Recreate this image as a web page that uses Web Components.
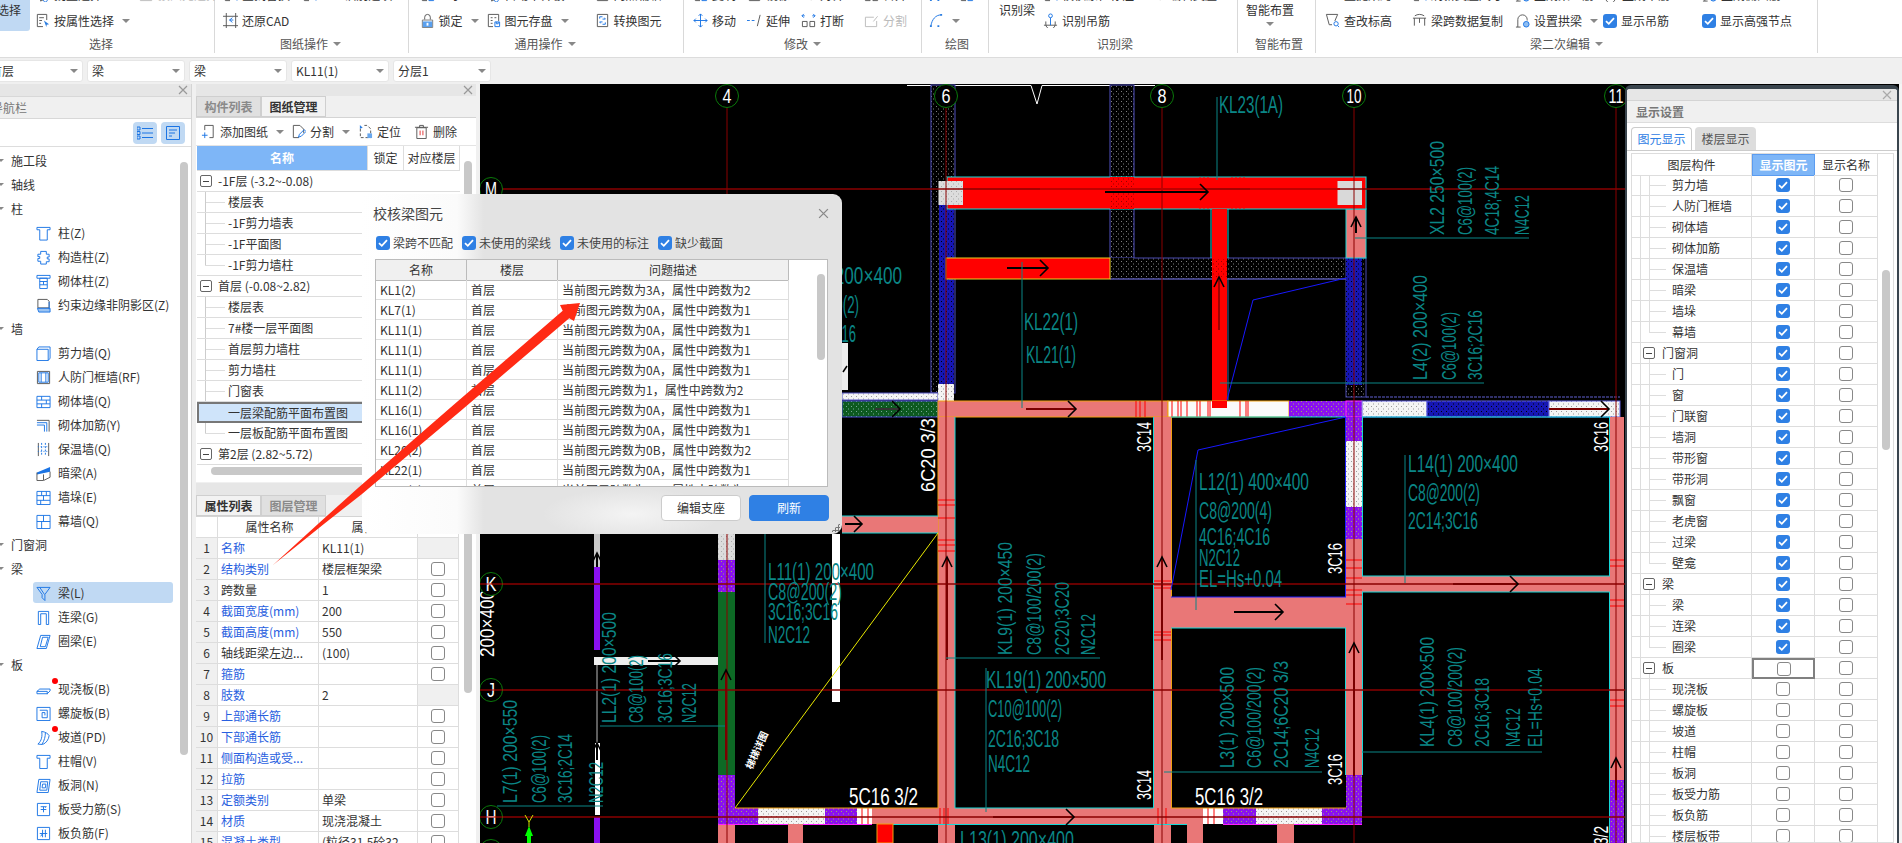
<!DOCTYPE html>
<html>
<head>
<meta charset="utf-8">
<title>校核梁图元</title>
<style>
  html, body { margin: 0; height: 100%; overflow: hidden; background: #f0f0f0; }
</style>
</head>
<body>
<gtj-app>
  <gtj-ribbon slot="ribbon">
    <rb-group w="215" pl="0" lx="89" label="选择">
      <rb-big w="30" sel="1" tx="-3">选择</rb-big>
      <rb-col ml="5">
        <rb-row><rb-item w="104" icon="filter">批量选择</rb-item><rb-item off="1" icon="split">按图元选择</rb-item></rb-row>
        <rb-row><rb-item icon="attr" caret="1">按属性选择</rb-item></rb-row>
      </rb-col>
    </rb-group>
    <rb-group w="193.5" pl="8" lx="65" label="图纸操作" caret="1">
      <rb-col>
        <rb-row><rb-item w="79" icon="find">查找替换</rb-item><rb-item icon="find">CAD识别选项</rb-item></rb-row>
        <rb-row><rb-item icon="crop">还原CAD</rb-item></rb-row>
      </rb-col>
    </rb-group>
    <rb-group w="275.5" pl="11" lx="106" label="通用操作" caret="1">
      <rb-col>
        <rb-row><rb-item w="66" icon="store">显示</rb-item><rb-item w="109" icon="filter">自动平齐板</rb-item><rb-item icon="convert">两点辅轴</rb-item></rb-row>
        <rb-row><rb-item w="66" icon="lock" caret="1">锁定</rb-item><rb-item w="109" icon="store" caret="1">图元存盘</rb-item><rb-item icon="convert">转换图元</rb-item></rb-row>
      </rb-col>
    </rb-group>
    <rb-group w="238" pl="9" lx="100" label="修改" caret="1">
      <rb-col>
        <rb-row><rb-item w="54" icon="store">复制</rb-item><rb-item w="54" icon="convert">镜像</rb-item><rb-item w="63" icon="extend">对齐</rb-item><rb-item icon="break">合并</rb-item></rb-row>
        <rb-row><rb-item w="54" icon="move">移动</rb-item><rb-item w="54" icon="extend">延伸</rb-item><rb-item w="63" icon="break">打断</rb-item><rb-item off="1" icon="split">分割</rb-item></rb-row>
      </rb-col>
    </rb-group>
    <rb-group w="67" pl="7" lx="23" label="绘图">
      <rb-col>
        <rb-row><rb-item w="30" icon="curve"></rb-item><rb-item icon="store"></rb-item></rb-row>
        <rb-row><rb-item icon="curve" caret="1"></rb-item></rb-row>
      </rb-col>
    </rb-group>
    <rb-group w="249" pl="10" lx="108" label="识别梁">
      <rb-big w="44">识别梁</rb-big>
      <rb-col>
        <rb-row><rb-item w="107" icon="find">校核原位标注</rb-item><rb-item icon="extend">编辑支座</rb-item></rb-row>
        <rb-row><rb-item icon="hang">识别吊筋</rb-item></rb-row>
      </rb-col>
    </rb-group>
    <rb-group w="78" pl="8" lx="17" label="智能布置">
      <rb-big w="60" drop="1">智能布置</rb-big>
    </rb-group>
    <rb-group w="502" pl="9" lx="214" label="梁二次编辑" caret="1">
      <rb-col>
        <rb-row><rb-item w="87" icon="copyspan">重提梁跨</rb-item><rb-item w="103" icon="find">刷新支座尺寸</rb-item><rb-item w="88" icon="arch">生成架立筋</rb-item><rb-item w="99" icon="hang">生成吊筋</rb-item><rb-item icon="arch">生成侧面筋</rb-item></rb-row>
        <rb-row><rb-item w="87" icon="elev">查改标高</rb-item><rb-item w="103" icon="copyspan">梁跨数据复制</rb-item><rb-item w="88" icon="arch" caret="1">设置拱梁</rb-item><rb-item w="99" chk="1">显示吊筋</rb-item><rb-item chk="1">显示高强节点</rb-item></rb-row>
      </rb-col>
    </rb-group>
  </gtj-ribbon>

  <layer-bar slot="bar">
    <sel-box w="98">首层</sel-box>
    <sel-box w="98">梁</sel-box>
    <sel-box w="98">梁</sel-box>
    <sel-box w="98">KL11(1)</sel-box>
    <sel-box w="98">分层1</sel-box>
  </layer-bar>

  <nav-panel slot="nav"></nav-panel>
  <mid-col slot="mid">
    <drawing-panel></drawing-panel>
    <prop-panel></prop-panel>
  </mid-col>
  <cad-canvas slot="canvas"></cad-canvas>

  <display-panel></display-panel>
  <check-dialog></check-dialog>
  <red-arrow></red-arrow>
</gtj-app>

<script>
// Shared icon set, everything is drawn in a 16x16 box
const D = (d, c = '#555') => `<path d="${d}" fill="none" stroke="${c}"/>`;
const B = (d) => D(d, '#1b74e4');
const F = (d, c = '#2b7de0') => `<path d="${d}" fill="${c}"/>`;
const ICONS = {
  attr: D('M2.5 1.5h10v6M2.5 1.5v13h6M4.5 5h5M4.5 8h3M4.5 11h2') + F('M9.5 8l5.5 4-2.5.4-.4 2.6z'),
  crop: D('M3.5 0v16M0 3.5h16M13.5 0v16M0 13.5h16') + B('M10 5L7 7.5 10 10M7 7.5h4'),
  lock: D('M5 7V4.5a3 3 0 0 1 6 0V7') + D('M2.5 7.5h11v8h-11z', '#777') + F('M3 9h10v6H3z', '#5aa0ee') + F('M7 10.5h2v3H7z', '#fff'),
  store: D('M2.5 1.5h11v7M2.5 1.5v13h5M5 5h2M9 5h2M5 8h2M5 11h2') + B('M9.5 9.5h5v5h-5zM11 9.5v2h2v-2'),
  convert: D('M2.5 1.5h11v13h-11z') + B('M5 6V4h3M11 10v2H8M8 6.5h3l-1-1.5M8 9.5H5l1 1.5'),
  move: B('M8 1v14M1 8h14M6 3l2-2 2 2M6 13l2 2 2-2M3 6L1 8l2 2M13 6l2 2-2 2'),
  extend: `<path d="M0 8h9" stroke="#1b74e4" stroke-dasharray="3 2" fill="none"/>` + D('M14 2l-3 12'),
  break: B('M3 1L1 3l2 2M13 1l2 2-2 2M1 3h3M12 3h3') + D('M1.5 9h5v5.5h-5zM9.5 9h5v5.5h-5z'),
  split: D('M1.5 4.5h9M1.5 4.5v10h12v-6M10 9l4.5-5.5', '#bbb'),
  curve: B('M2 14C3 7 7 2 13 2') + F('M1 13h2v2H1zM12 1h2v2h-2zM9 13h2v2H9z'),
  hang: D('M3 9v3a5 5 0 0 0 10 0V9M1 13h14') + B('M6 3a2 2 0 1 0 4 0 2 2 0 1 0-4 0M8 5v8'),
  find: D('M2.5 1.5h8v5M2.5 1.5v13h5') + B('M9 9.5a2.5 2.5 0 1 0 5 0 2.5 2.5 0 1 0-5 0M13 12l2 2.5'),
  filter: D('M1.5 2.5h12l-4.5 6v5l-3 1.5V8.5z') + B('M11 12a2 2 0 1 0 .1 0'),
  elev: D('M1.5 1.5h12l-3 7M1.5 1.5l3 11h3') + B('M9.5 11.5a2.3 2.3 0 1 0 4.6 0 2.3 2.3 0 1 0-4.6 0M13.5 13.5l1.5 1.5'),
  copyspan: D('M1 5.5h14M2.5 5.5v8M8 5.5v5M13.5 5.5v8M3 3c3-2 7-2 10 0'),
  arch: D('M3 15V7a5 5 0 0 1 10 0v1M1 15h5') + `<circle cx="12" cy="12" r="3" fill="#8fbef2" stroke="#1b74e4"/>`,
  add: D('M4 1.5h9v13h-4M4 1.5v5') + B('M4 9v6M1 12h6'),
  cut: D('M2.5 1.5h7l4 4v4M2.5 1.5v13h6') + B('M8 14l1-3 5-5 2 2-5 5z'),
  locate: `<path d="M2.5 5v9.5h11V5l-4-3.5H6" fill="none" stroke="#555" stroke-dasharray="3 2"/>` + F('M2 1l3 3-3 1z') + F('M10 10h5v5h-5z', '#6aa8ee'),
  trash: D('M3 4h10v11.5H3zM1 3.5h14M6 3.5V1.5h4v2') + `<path d="M6.5 7v5M9.5 7v5" stroke="#e03030" fill="none"/>`,
  // navigation tree
  col: B('M1 1.5h14v2.5h-3v11H4V4H1z'),
  gz: B('M5 1.5h6v3h3v3h-2v2h2v3h-3v2.5H5V12H2V9h2V7H2V4.5h3z'),
  brickcol: B('M1 1.5h14v3H1zM4 4.5h8v11H4zM4 8h8M4 11.5h8M8 8v3.5'),
  edge: D('M2 1.5h10l2 2v7H2z', '#555') + `<path d="M1.5 11h13.5v4H3zM14 4v8" fill="#9cc4f2" stroke="#1b74e4"/>`,
  wall: B('M1 3.5h12v12H1zM1 3.5l2-2.5h12v12l-2 2.5'),
  door: D('M1.5 1.5h13v13h-13z') + B('M5.5 3v10M10.5 3v10M3 3h10v10H3z'),
  brick: B('M1 2.5h14v12H1zM1 6.5h14M1 10.5h14M6 2.5v4M11 6.5v4M6 10.5v4'),
  rein: D('M1 2.5h13v12') + B('M1 5h10.5v9.5M1 7.5h8v7'),
  insu: D('M2.5 1v14M13.5 1v14') + `<path d="M6 1v14M10 1v14" stroke="#1b74e4" stroke-dasharray="2 1.5" fill="none"/><path d="M2 5h12M2 10h12" stroke="#1b74e4" stroke-dasharray="1 2"/>`,
  anbeam: F('M1 7L15 1v5L1 9z', '#1b74e4') + D('M1 7v8.5h7l7-3.5V6') + D('M8 9v6'),
  pier: B('M1 1.5h14v14H1zM1 6h14M1 11h14M6 1.5V6M11 1.5V6M8 6v5M5 11v4.5'),
  curtain: B('M1 1.5h14v14H1zM1 8h14M8 1.5V8M6 8v7.5'),
  beam: B('M1 1.5h14L9.5 9v6.5l-3-3V9zM4 1.5l5 7.5'),
  lian: B('M2.5 15.5V1.5h11v14M5 15.5V4h6v11.5M2.5 15.5H5M11 15.5h2.5'),
  ring: B('M5 1.5h10l-4 14H1zM7 3.5h6l-3 10H4.5z'),
  slab: B('M1 10l3-2.5h11v2l-3 3H1zM1 10h11v3'),
  spiral: B('M1 1.5h14v14H1zM4 4.5h8v8H6.5V7h3v3'),
  ramp: B('M2 15C6 12 7 6 6 1.5 10 2 13 4 14 6c-.5 4-3 8-7 9.5zM10 3c0 4-1 8-3.5 12'),
  cap: B('M1 1.5h14v3h-3v11H4v-11H1z'),
  hole: B('M3 1.5h12l-2 14H1zM5 4h7.5l-1 9H4zM7 6.5h3.5l-.5 4H6.5z'),
  rebar: B('M1.5 1.5h13v13h-13zM5 8h6M8 5v6M5 5h6M11 5l-1 1'),
  neg: B('M1.5 1.5h13v13h-13zM4 8h8M7 4v8M10 4v8M5 11l2-3')
};
const icon = (name, size = 15) => `<svg width="${size}" height="${size}" viewBox="0 0 16 16" style="flex:none;display:block">${ICONS[name] || ''}</svg>`;
const CLOSE = (c = '#999') => `<svg width="10" height="10" viewBox="0 0 10 10"><path d="M1 1l8 8M9 1L1 9" stroke="${c}" stroke-width="1.2"/></svg>`;
const CARET = `<i style="flex:none;width:0;height:0;border:4px solid transparent;border-top:4px solid #888;border-bottom:0;display:block"></i>`;

class Base extends HTMLElement {
  connectedCallback() {
    if (this.shadowRoot) return;
    this.attachShadow({ mode: 'open' }).innerHTML = this.render();
  }
  a(name, dflt = '') { return this.hasAttribute(name) ? this.getAttribute(name) : dflt; }
}

class GtjApp extends Base {
  render() {
    return `<style>
      :host { display: flex; flex-direction: column; position: relative; width: 1902px; height: 843px; overflow: hidden;
        font: 12px/16px "Noto Sans CJK SC", "Noto Sans", sans-serif; color: #333; }
      .main { display: flex; height: 759px; }
    </style>
    <slot name="ribbon"></slot><slot name="bar"></slot>
    <div class="main"><slot name="nav"></slot><slot name="mid"></slot><slot name="canvas"></slot></div>
    <slot></slot>`;
  }
}

class GtjRibbon extends Base {
  render() {
    return `<style>:host { display: flex; height: 57px; background: #fff; overflow: hidden; border-bottom: 1px solid #dcdcdc; flex: none; }</style><slot></slot>`;
  }
}

class RbGroup extends Base {
  render() {
    return `<style>
      :host { display: flex; flex-direction: column; box-sizing: border-box; flex: none; height: 53px; width: ${this.a('w')}px; border-right: 1px solid #d9d9d9; }
      .body { display: flex; height: 46px; margin-top: -14px; padding-left: ${this.a('pl')}px; }
      .lab { display: flex; align-items: center; gap: 5px; height: 18px; margin-top: 3px; padding-left: ${this.a('lx')}px; color: #555; }
    </style>
    <div class="body"><slot></slot></div>
    <div class="lab">${this.a('label')}${this.hasAttribute('caret') ? CARET : ''}</div>`;
  }
}

class RbBig extends Base {
  render() {
    const sel = this.hasAttribute('sel');
    return `<style>
      :host { display: block; flex: none; box-sizing: border-box; width: ${this.a('w')}px; height: 32px; margin-top: 14px; white-space: nowrap; overflow: hidden; }
      .t { line-height: 20px; margin-left: ${this.a('tx', '0')}px; }
      .c { display: flex; justify-content: center; margin: 2px 0 0 -12px; }
      ${sel ? ':host { background: #c0d9f3; border-radius: 0 0 3px 0; height: 31px; }' : ''}
    </style><div class="t"><slot></slot></div>${this.hasAttribute('drop') ? `<div class="c">${CARET}</div>` : ''}`;
  }
}

class RbCol extends Base {
  render() {
    return `<style>:host { display: flex; flex-direction: column; margin-left: ${this.a('ml', '0')}px; }</style><slot></slot>`;
  }
}

class RbRow extends Base {
  render() {
    // the upper row only shows its last pixels at the window's top edge
    return `<style>:host { display: flex; height: 23px; } :host(:first-child) { margin: -3px 0 3px; }</style><slot></slot>`;
  }
}

class XCheck extends Base {
  render() {
    const on = this.hasAttribute('checked');
    return `<style>:host { display: block; flex: none; width: 14px; height: 14px; box-sizing: border-box; border-radius: 3px;
      ${on ? 'background: #2f80e4;' : 'background: #fff; border: 1px solid #888;'} }</style>
      ${on ? '<svg width="14" height="14" viewBox="0 0 14 14" style="display:block"><path d="M3 7.2l2.8 2.6L11 4.2" fill="none" stroke="#fff" stroke-width="1.8"/></svg>' : ''}`;
  }
}

class RbItem extends Base {
  render() {
    const w = this.a('w');
    const off = this.hasAttribute('off');
    return `<style>
      :host { display: flex; align-items: center; gap: 4px; height: 23px; flex: none; white-space: nowrap; ${w ? `width:${w}px;` : ''} ${off ? 'color:#bbb;' : ''} }
      .cr { margin-left: 4px; }
    </style>
    ${this.hasAttribute('chk') ? '<x-check checked></x-check>' : icon(this.a('icon'))}
    <slot></slot>${this.hasAttribute('caret') ? `<span class="cr">${CARET}</span>` : ''}`;
  }
}

class LayerBar extends Base {
  render() {
    return `<style>:host { display: flex; align-items: center; gap: 4px; height: 26px; flex: none; margin-left: -15px; background: #f0f0f0; }</style><slot></slot>`;
  }
}

class SelBox extends Base {
  render() {
    return `<style>
      :host { display: flex; align-items: center; justify-content: space-between; box-sizing: border-box; flex: none; width: ${this.a('w')}px; height: 22px;
        padding: 0 4px; background: #fff; border: 1px solid #e6e6e6; border-radius: 3px; }
    </style><span><slot></slot></span>${CARET}`;
  }
}

class NavPanel extends Base {
  render() {
    const rows = [
      ['施工段'], ['轴线'], ['柱'], ['柱(Z)', 'col'], ['构造柱(Z)', 'gz'], ['砌体柱(Z)', 'brickcol'], ['约束边缘非阴影区(Z)', 'edge'],
      ['墙'], ['剪力墙(Q)', 'wall'], ['人防门框墙(RF)', 'door'], ['砌体墙(Q)', 'brick'], ['砌体加筋(Y)', 'rein'], ['保温墙(Q)', 'insu'],
      ['暗梁(A)', 'anbeam'], ['墙垛(E)', 'pier'], ['幕墙(Q)', 'curtain'], ['门窗洞'], ['梁'], ['梁(L)', 'beam', 'sel'], ['连梁(G)', 'lian'], ['圈梁(E)', 'ring'],
      ['板'], ['现浇板(B)', 'slab', 'dot'], ['螺旋板(B)', 'spiral'], ['坡道(PD)', 'ramp', 'dot'], ['柱帽(V)', 'cap'], ['板洞(N)', 'hole'], ['板受力筋(S)', 'rebar'], ['板负筋(F)', 'neg'], ['板加筋(G)', 'rebar']
    ];
    const html = rows.map(([t, ic, st]) => ic
      ? `<div class="row child ${st === 'sel' ? 'sel' : ''}">${icon(ic)}${st === 'dot' ? '<b class="dot"></b>' : ''}<span>${t}</span></div>`
      : `<div class="row parent"><i class="tw"></i><span>${t}</span></div>`).join('');
    return `<style>
      :host { display: flex; flex-direction: column; position: relative; box-sizing: border-box; flex: none; width: 192px; height: 759px; overflow: hidden; background: #fff; border-right: 1px solid #d4d4d4; }
      .band { display: flex; justify-content: flex-end; align-items: center; height: 12px; padding-right: 3px; background: #e6e6e6; flex: none; }
      .title { height: 21px; line-height: 21px; flex: none; margin-left: -33px; padding-left: 0; color: #777; background: #f0f0f0; border-top: 1px solid #d8d8d8; border-bottom: 1px solid #d8d8d8; white-space: nowrap; }
      .tools { display: flex; justify-content: flex-end; align-items: center; gap: 4px; height: 27px; padding-right: 6px; flex: none; border-bottom: 1px solid #ddd; }
      .tb { display: flex; align-items: center; justify-content: center; width: 24px; height: 22px; background: #c0d9f3; border-radius: 4px; }
      .tree { padding-top: 2px; }
      .row { display: flex; align-items: center; height: 24px; white-space: nowrap; position: relative; }
      .parent { padding-left: 11px; }
      .tw { position: absolute; left: -2px; top: 10px; width: 0; height: 0; border: 3px solid transparent; border-top: 3px solid #888; border-bottom: 0; }
      .child { padding-left: 36px; gap: 7px; }
      .sel::before { content: ''; position: absolute; left: 33px; top: 1px; width: 140px; height: 21px; background: #c0d9f3; border-radius: 3px; }
      .sel svg, .sel span { position: relative; }
      .dot { position: absolute; left: 52px; top: 1px; width: 6px; height: 6px; border-radius: 50%; background: #f00; }
      .thumb { position: absolute; left: 180px; top: 78px; width: 8px; height: 593px; background: #c8c8c8; border-radius: 4px; }
    </style>
    <div class="band">${CLOSE()}</div>
    <div class="title">构件导航栏</div>
    <div class="tools">
      <div class="tb"><svg width="16" height="14" viewBox="0 0 16 14"><path d="M5 2.5h11M5 7h11M5 11.5h11" stroke="#1b74e4" fill="none"/><path d="M0 1h3v3H0zM0 5.5h3v3H0zM0 10h3v3H0z" fill="none" stroke="#1b74e4"/></svg></div>
      <div class="tb"><svg width="16" height="16" viewBox="0 0 16 16"><path d="M1.5 1.5h13v13h-13zM4 5h8M4 8h6M4 11h3" fill="none" stroke="#1b74e4"/></svg></div>
    </div>
    <div class="tree">${html}</div>
    <div class="thumb"></div>`;
  }
}

class MidCol extends Base {
  render() {
    return `<style>:host { display: flex; flex-direction: column; box-sizing: border-box; flex: none; width: 288px; height: 759px; padding: 0 4px; overflow: hidden; background: #f0f0f0; }</style><slot></slot>`;
  }
}

const PANEL_CSS = `
  .band { display: flex; justify-content: flex-end; align-items: center; height: 12px; padding-right: 3px; background: #e6e6e6; flex: none; }
  .tabs { display: flex; height: 22px; background: #f0f0f0; flex: none; border-bottom: 1px solid #d4d4d4; box-sizing: border-box; }
  .tab { display: flex; align-items: center; justify-content: center; box-sizing: border-box; width: 65px; font-weight: 700; color: #8a8a8a; background: #e0e0e0; border: 1px solid #cfcfcf; }
  .tab.on { color: #333; background: #f2f2f2; }
  .thumb { position: absolute; background: #c8c8c8; border-radius: 4px; }
  .pm { display: block; flex: none; box-sizing: border-box; width: 12px; height: 12px; border: 1px solid #666; border-radius: 2px; background: linear-gradient(#444, #444) center / 6px 1px no-repeat #fff; }
`;

class DrawingPanel extends Base {
  render() {
    const rows = [
      ['-1F层 (-3.2~-0.08)', 1], ['楼层表'], ['-1F剪力墙表'], ['-1F平面图'], ['-1F剪力墙柱', 0, 'last'],
      ['首层 (-0.08~2.82)', 1], ['楼层表'], ['7#楼一层平面图'], ['首层剪力墙柱'], ['剪力墙柱'], ['门窗表'],
      ['一层梁配筋平面布置图', 0, 'sel'], ['一层板配筋平面布置图', 0, 'last'], ['第2层 (2.82~5.72)', 1]
    ];
    const html = rows.map(([t, p, st]) => p
      ? `<div class="r p"><span class="pm"></span><span>${t}</span></div>`
      : `<div class="r c ${st || ''}"><span>${t}</span></div>`).join('');
    return `<style>${PANEL_CSS}
      :host { display: flex; flex-direction: column; position: relative; flex: none; width: 280px; height: 398px; overflow: hidden; background: #fff; }
      .tools { display: flex; align-items: center; height: 28px; padding-left: 5px; flex: none; border-bottom: 1px solid #e4e4e4; box-sizing: border-box; }
      .head { display: grid; grid-template-columns: 171px 36px 56px; height: 25px; margin-left: 1px; width: 263px; flex: none; }
      .head div { display: flex; align-items: center; justify-content: center; border-right: 1px solid #ddd; border-bottom: 1px solid #ddd; }
      .head .on { background: #7eb6f7; color: #fff; font-weight: 700; }
      .r { display: flex; align-items: center; box-sizing: border-box; height: 21px; margin-left: 1px; width: 263px; border-bottom: 1px solid #ddd; white-space: nowrap; }
      .p { padding-left: 3px; gap: 6px; }
      .c { padding-left: 31px; background: linear-gradient(#ccc, #ccc) 8px 0 / 1px 100% no-repeat, linear-gradient(#ddd, #ddd) 8px 10px / 20px 1px no-repeat; }
      .c.last { background: linear-gradient(#ccc, #ccc) 8px 0 / 1px 10px no-repeat, linear-gradient(#ddd, #ddd) 8px 10px / 20px 1px no-repeat; }
      .c.sel { background: #cfe4fa; border: 2px solid #777; padding-left: 29px; }
    </style>
    <div class="band">${CLOSE()}</div>
    <div class="tabs"><div class="tab">构件列表</div><div class="tab on">图纸管理</div></div>
    <div class="tools">
      <rb-item w="90" icon="add" caret="1">添加图纸</rb-item>
      <rb-item w="67" icon="cut" caret="1">分割</rb-item>
      <rb-item w="56" icon="locate">定位</rb-item>
      <rb-item icon="trash">删除</rb-item>
    </div>
    <div class="head"><div class="on">名称</div><div>锁定</div><div>对应楼层</div></div>
    ${html}
    <div class="thumb" style="left:268px;top:77px;width:8px;height:110px"></div>
    <div class="thumb" style="left:15px;top:383px;width:200px;height:8px"></div>`;
  }
}

class PropPanel extends Base {
  render() {
    const rows = [
      ['名称', 'KL11(1)', 1, 0], ['结构类别', '楼层框架梁', 1, 1], ['跨数量', '1', 0, 1], ['截面宽度(mm)', '200', 1, 1], ['截面高度(mm)', '550', 1, 1],
      ['轴线距梁左边...', '(100)', 0, 1], ['箍筋', '', 1, 1], ['肢数', '2', 1, 0], ['上部通长筋', '', 1, 1], ['下部通长筋', '', 1, 1],
      ['侧面构造或受...', '', 1, 1], ['拉筋', '', 1, 1], ['定额类别', '单梁', 1, 1], ['材质', '现浇混凝土', 1, 1], ['混凝土类型', '(粒径31.5砼32', 1, 1]
    ];
    const html = rows.map(([n, v, blue, chk], i) => `<div class="i">${i + 1}</div><div class="${blue ? 'b' : ''}">${n}</div><div>${v}</div>
      <div class="k ${chk ? '' : 'g'}">${chk ? '<x-check></x-check>' : ''}</div>`).join('');
    return `<style>${PANEL_CSS}
      :host { display: flex; flex-direction: column; position: relative; flex: 1; width: 280px; margin-top: 1px; overflow: hidden; background: #fff; }
      .grid { display: grid; grid-template-columns: 22px 101px 99px 41px; grid-auto-rows: 21px; width: 263px; margin-left: 0; }
      .grid > div { display: flex; align-items: center; padding-left: 3px; box-sizing: border-box; border-right: 1px solid #ddd; border-bottom: 1px solid #ddd; white-space: nowrap; overflow: hidden; }
      .grid .i { justify-content: center; padding: 0; background: #f0f0f0; }
      .grid .h { justify-content: center; }
      .grid .k { justify-content: center; padding: 0; }
      .grid .g { background: #f0f0f0; }
      .b { color: #2860e0; }
    </style>
    <div class="band"></div>
    <div class="tabs"><div class="tab on">属性列表</div><div class="tab">图层管理</div></div>
    <div class="grid"><div class="i" style="background:#fff"></div><div class="h">属性名称</div><div class="h">属性值</div><div class="h">附加</div>${html}</div>
    <div class="thumb" style="left:268px;top:39px;width:8px;height:171px"></div>`;
  }
}

class CadCanvas extends Base {
  render() {
    const PINK = '#e97777', CY = '#17d8d8', PUR = '#8a10f0', TEAL = '#0b8686', OR = '#f0a010', MAG = '#ff20ff';
    const R = (x1, y1, x2, y2, f, s) => `<rect x="${x1}" y="${y1}" width="${x2 - x1}" height="${y2 - y1}" fill="${f}"${s ? ` stroke="${s}"` : ''}/>`;
    const L = (x1, y1, x2, y2, s, w = 1) => `<line x1="${x1}" y1="${y1}" x2="${x2}" y2="${y2}" stroke="${s}" stroke-width="${w}"/>`;
    // Horizontal and rotated text, stretched to the width it has on the drawing
    const H = (x1, x2, y, t, c = TEAL, fs = 23) => `<text x="${x1}" y="${y}" textLength="${x2 - x1}" lengthAdjust="spacingAndGlyphs" font-size="${fs}" fill="${c}">${t}</text>`;
    const V = (x, y1, y2, t, c = TEAL, fs = 21) => `<text transform="translate(${x} ${y1}) rotate(-90)" textLength="${y1 - y2}" lengthAdjust="spacingAndGlyphs" font-size="${fs}" fill="${c}">${t}</text>`;
    const AH = (x1, x2, y, c = '#000') => L(x1, y, x2, y, c, 2) + `<path d="M${x2 - 8} ${y - 8}L${x2} ${y}L${x2 - 8} ${y + 8}" fill="none" stroke="#000" stroke-width="1.6"/>`;
    const AV = (x, y1, y2, c = '#000') => L(x, y1, x, y2, c, 2) + `<path d="M${x - 5} ${y2 + 10}L${x} ${y2}L${x + 5} ${y2 + 10}" fill="none" stroke="#000" stroke-width="1.6"/>`;
    const AXIS = (x, y, t, tw = 9) => `<circle cx="${x}" cy="${y}" r="11.5" fill="#000" stroke="#0a7a0a"/>` +
      `<text x="${x - tw / 2}" y="${y + 7}" textLength="${tw}" lengthAdjust="spacingAndGlyphs" font-size="20" fill="#fff">${t}</text>`;
    const ticksH = (x1, x2, ys) => ys.map(y => L(x1, y, x2, y, '#f00')).join('');
    const ticksV = (xs, y1, y2) => xs.map(x => L(x, y1, x, y2, '#f00')).join('');
    const pat = (id, bg, dot) => `<pattern id="${id}" width="5" height="5" patternUnits="userSpaceOnUse"><rect width="5" height="5" fill="${bg}"/><rect x="1" y="1" width="1" height="1" fill="${dot}"/><rect x="3" y="3.5" width="1" height="1" fill="${dot}"/></pattern>`;
    const body = [
      R(480, 84, 1902, 843, '#000'),
      `<defs>${pat('dDark', '#000', '#7e7e7e')}${pat('dWhite', '#f4f4f4', '#999')}${pat('dBlue', '#1616b4', '#000')}${pat('dPur', '#8a10f0', '#a0b060')}${pat('dGreen', '#0d5a20', '#7a9')}${pat('dRed', '#f00', '#900')}${pat('dGray', '#dcdcdc', '#aaa')}</defs>`,
      // top white marks
      `<path d="M907 85.5H1022L1031 85.5L1037 104L1042 85.5H1155" fill="none" stroke="#fff"/>`,
      // dotted walls
      R(931, 85, 955, 393, 'url(#dDark)', '#5050c0'),
      R(939, 205, 954, 385, 'url(#dBlue)'),
      R(1110, 85, 1134, 258, 'url(#dDark)', '#5050c0'),
      R(1110, 258, 1346, 279, 'url(#dDark)'), L(1134, 258, 1346, 258, '#4a4ab0'), L(1110, 279, 1346, 279, '#8080ff'),
      R(1346, 258, 1366, 397, 'url(#dDark)', '#4a4ab0'),
      R(1346, 258, 1362, 385, 'url(#dBlue)'),
      `<path d="M1366 397H1620" stroke="#6060d0" stroke-dasharray="3 1" fill="none"/>`,
      R(1346, 209, 1366, 258, PINK, CY),
      // red beams
      R(947, 177, 1366, 209, '#f00', CY),
      R(1110, 177, 1134, 209, 'url(#dRed)'),
      R(938.5, 181, 963, 205, 'url(#dGray)'),
      R(1337.5, 181, 1362, 205, '#d9d9d9'),
      R(1212, 209, 1227, 408, '#f00'), L(1211, 209, 1211, 258, CY), L(1228, 209, 1228, 258, CY), L(1228, 279, 1228, 400, '#3a6a9a'),
      R(1212, 259, 1227, 278, 'url(#dRed)'),
      R(946, 258, 1110, 279, '#f00', '#e8d020'),
      ticksV([1200, 1204, 1208, 1232, 1236, 1240, 1244], 177, 209),
      // main horizontal beam
      R(842, 393, 938, 400, 'url(#dWhite)', '#5050c0'),
      R(938, 384, 954, 401, 'url(#dWhite)'),
      R(842, 401, 938, 417, 'url(#dGreen)', '#4a4ad0'),
      R(938, 401, 1168, 417, PINK, OR),
      R(1168, 401, 1289, 417, '#fafafa', OR),
      ticksV([1172, 1178, 1181, 1187, 1197, 1200, 1208, 1210, 1240, 1246, 1248], 401, 417),
      ticksV([1136, 1140, 1145], 401, 417),
      R(1212, 401, 1227, 408, '#f00'),
      R(1289, 401, 1346, 417, 'url(#dPur)'),
      R(1346, 401, 1362, 417, 'url(#dPur)', MAG),
      R(1362, 401, 1427, 417, 'url(#dWhite)', '#6060e0'),
      R(1427, 401, 1549, 417, 'url(#dBlue)', '#6060e0'),
      R(1549, 401, 1620, 417, 'url(#dWhite)', '#6060e0'),
      // columns
      R(938, 417, 955, 843, PINK), L(938, 417, 938, 808, OR), L(955, 417, 955, 808, CY),
      R(1154, 417, 1171, 843, PINK), L(1153.5, 417, 1153.5, 808, CY), L(1171.5, 417, 1171.5, 597, OR), L(1171.5, 628, 1171.5, 808, OR),
      R(1346, 417, 1362, 441, 'url(#dPur)'), R(1346, 441, 1362, 507, 'url(#dWhite)'), R(1346, 507, 1362, 539, 'url(#dPur)'), R(1346, 539, 1362, 775, PINK), R(1346, 775, 1362, 824, 'url(#dPur)'),
      R(1610, 417, 1624, 843, PINK), R(1610, 780, 1624, 843, 'url(#dPur)'),
      R(718, 534, 735, 560, 'url(#dGray)'), R(718, 560, 735, 592, 'url(#dPur)'), R(718, 592, 735, 775, '#0d6a25'), R(718, 775, 735, 808, 'url(#dPur)'), R(718, 824, 735, 843, PINK),
      // cross beams
      R(842, 516, 938, 533, PINK), L(842, 516, 938, 516, CY), L(842, 533, 938, 533, CY),
      R(1171, 597, 1346, 628, PINK), L(1171, 597, 1346, 597, '#2020ff'), L(1171, 628, 1346, 628, CY),
      R(1362, 576, 1610, 592, PINK), L(1362, 576, 1610, 576, CY), L(1362, 592, 1610, 592, CY),
      // room outlines
      L(1171, 417, 1346, 417, CY), L(1362, 417, 1610, 417, CY), L(1345.5, 417, 1345.5, 597, '#2020ff'), L(1345.5, 628, 1345.5, 775, CY), L(1362.5, 417, 1362.5, 576, CY), L(1362.5, 592, 1362.5, 775, CY), L(1609.5, 417, 1609.5, 576, CY), L(1609.5, 592, 1609.5, 843, CY),
      // bottom band
      R(718, 808, 758, 824, 'url(#dPur)'), R(758, 808, 825, 824, 'url(#dWhite)'), R(825, 808, 857, 824, 'url(#dPur)'), R(857, 808, 872, 824, '#fff'), ticksV([862, 868], 808, 824),
      R(872, 808, 1203, 824, PINK), ticksV([940, 944, 948, 1158, 1166], 808, 824),
      R(1203, 808, 1223, 824, '#fff'), ticksV([1208, 1214], 808, 824),
      R(1223, 808, 1256, 824, 'url(#dPur)'), R(1256, 808, 1322, 824, 'url(#dWhite)'), R(1322, 808, 1362, 824, 'url(#dPur)'),
      L(718, 824.5, 872, 824.5, MAG), L(1223, 824.5, 1362, 824.5, MAG),
      L(955, 808, 1153, 808, CY), L(1171, 808, 1346, 808, OR), L(735, 808, 938, 808, OR), L(893, 824.5, 1187, 824.5, CY),
      R(788, 824, 803, 843, PINK), R(877, 824, 893, 843, '#f00', OR), R(1187, 824, 1203, 843, PINK), R(1277, 824, 1294, 843, PINK),
      // thin white strips
      R(832, 534, 840, 702, '#fff'), R(594, 534, 600, 567, '#c8c8c8'), R(594, 567, 600, 650, PUR), R(594, 657, 718, 665, '#eee'), R(595, 743, 600, 815, '#fff'), L(597, 665, 597, 743, '#bbb'), R(594, 817, 600, 843, PUR),
      R(842, 343, 848, 390, '#eee'), L(843, 372, 847, 366, '#000', 1.5),
      // red ticks on columns
      ticksH(938, 955, [500, 505, 518, 540, 545, 551]), ticksH(1154, 1171, [581, 585, 588, 632, 635, 640]),
      ticksH(1346, 1362, [560, 568, 578, 590, 595, 604]), ticksH(1610, 1624, [560, 566, 600, 606, 700, 706]),
      // axes
      [727, 946, 1162, 1354, 1616].map(x => L(x, 84, x, 843, '#8a0000')).join(''),
      [189, 584, 690, 817].map(y => L(480, y, 1625, y, '#8a0000', 1.5)).join(''),
      L(1040, 189, 1200, 189, '#c00000', 2), L(1250, 189, 1340, 189, '#c00000', 2),
      // thin blue and yellow lines
      `<path d="M1346 278L1253 300L1227 400" fill="none" stroke="#1818ff"/>`,
      `<path d="M1346 417L1198 450L1171 590" fill="none" stroke="#1818ff"/>`,
      L(938, 533, 735, 808, '#e8e800'),
      // arrows
      AH(1105, 1208, 192), AH(1007, 1048, 268), AH(1026, 1076, 409, '#7a0000'), AH(845, 862, 524), AH(1234, 1283, 612), AH(1453, 1518, 584, '#7a0000'), AH(993, 1074, 817, '#7a0000'), AH(1549, 1609, 409, '#7a0000'), AH(648, 680, 661), AH(875, 900, 409, '#333'),
      AV(1356, 233, 217), AV(1219, 330, 277, '#a00000'), AV(947, 660, 557, '#7a0000'), AV(1162, 660, 557, '#7a0000'), AV(1354, 776, 643, '#7a0000'), AV(1616, 800, 758, '#7a0000'), AV(726, 760, 670, '#7a0000'), AV(597, 567, 553), AV(597, 760, 743),
      // leaders
      L(1217, 97, 1217, 180, TEAL), L(1022, 262, 1022, 408, TEAL), L(1355, 238, 1529, 238, TEAL), L(1220, 383, 1484, 383, TEAL), L(1405, 455, 1405, 583, TEAL), L(1196, 460, 1196, 610, TEAL),
      L(946, 658, 1100, 658, TEAL), L(765, 534, 765, 643, TEAL), L(986, 668, 986, 812, TEAL), L(1164, 772, 1322, 772, TEAL), L(1362, 752, 1542, 752, TEAL), L(600, 726, 725, 726, TEAL), L(497, 806, 603, 806, TEAL),
      // labels
      H(1219, 1283, 113, 'KL23(1A)'), H(1024, 1078, 330, 'KL22(1)'), H(1026, 1076, 363, 'KL21(1)'),
      H(790, 902, 284, 'L6(1) 200×400'), H(790, 859, 313, 'C8@100(2)'), H(790, 856, 342, '3C16;3C16'),
      V(1444, 235, 141, 'XL2 250×500'), V(1472, 235, 167, 'C6@100(2)'), V(1499, 235, 166, '4C18;4C14'), V(1529, 235, 195, 'N4C12'),
      V(1427, 380, 275, 'L4(2) 200×400'), V(1456, 380, 312, 'C6@100(2)'), V(1482, 380, 310, '3C16;2C16'),
      H(1408, 1518, 472, 'L14(1) 200×400'), H(1408, 1480, 501, 'C8@200(2)'), H(1408, 1478, 529, '2C14;3C16'),
      H(1199, 1309, 490, 'L12(1) 400×400'), H(1199, 1272, 519, 'C8@200(4)'), H(1199, 1270, 545, '4C16;4C16'), H(1199, 1240, 566, 'N2C12'), H(1199, 1282, 587, 'EL=Hs+0.04'),
      V(1012, 655, 542, 'KL9(1) 200×450'), V(1041, 655, 553, 'C8@100/200(2)'), V(1069, 655, 582, '2C20;3C20'), V(1095, 655, 614, 'N2C12'),
      H(768, 874, 580, 'L11(1) 200×400'), H(768, 842, 600, 'C8@200(2)'), H(768, 838, 620, '3C16;3C16'), H(768, 810, 643, 'N2C12'),
      H(986, 1106, 688, 'KL19(1) 200×500'), H(988, 1062, 717, 'C10@100(2)'), H(988, 1059, 747, '2C16;3C18'), H(988, 1030, 772, 'N4C12'),
      V(1234, 768, 667, 'L3(1) 200×500'), V(1261, 768, 667, 'C6@100/200(2)'), V(1288, 768, 661, '2C14;6C20 3/3'), V(1319, 768, 728, 'N4C12'),
      V(1434, 747, 637, 'KL4(1) 200×500'), V(1462, 747, 647, 'C8@100/200(2)'), V(1489, 747, 678, '2C16;3C18'), V(1520, 747, 708, 'N4C12'), V(1542, 747, 668, 'EL=Hs+0.04'),
      V(616, 723, 612, 'LL2(1) 200×500'), V(643, 723, 655, 'C8@100(2)'), V(672, 723, 653, '3C16;3C16'), V(696, 723, 683, 'N2C12'),
      V(517, 803, 700, 'L7(1) 200×550'), V(546, 803, 735, 'C6@100(2)'), V(572, 803, 734, '3C16;2C14'), V(603, 803, 762, 'N2C12'),
      H(960, 1074, 848, 'L13(1) 200×400'),
      // white rebar labels
      V(935, 492, 418, '6C20 3/3', '#fff'), V(1151, 452, 422, '3C14', '#fff'), V(1608, 452, 422, '3C16', '#fff'), V(1342, 574, 543, '3C16', '#fff'), V(1342, 785, 754, '3C16', '#fff'), V(1151, 800, 770, '3C14', '#fff'),
      V(494, 657, 590, '200×400', '#fff'), H(849, 918, 805, '5C16 3/2', '#fff'), H(1195, 1263, 805, '5C16 3/2', '#fff'), V(1608, 845, 826, '3/2', '#fff'),
      `<text transform="translate(752 770) rotate(-66)" font-size="10" font-family="'Noto Sans CJK SC'" font-weight="700" fill="#fff">梯梯详图</text>`,
      // axis bubbles
      AXIS(727, 96, '4'), AXIS(946, 96, '6'), AXIS(1162, 96, '8'), AXIS(1354, 96, '10', 15), AXIS(1616, 96, '11', 15),
      AXIS(491, 189, 'M', 12), AXIS(491, 584, 'K', 11), AXIS(491, 690, 'J', 8), AXIS(491, 817, 'H', 11), AXIS(491, 851, 'G', 11),
      L(480, 584, 503, 584, '#c00000'), L(480, 690, 503, 690, '#c00000'), L(480, 817, 503, 817, '#c00000'),
      // coordinate marker
      `<path d="M525 815L529 822L533 815M529 822V827" fill="none" stroke="#d0e000"/><path d="M529 826L525 836H533z" fill="#0f0"/>`, R(527, 836, 531, 843, '#0f0'),
      R(1899, 84, 1902, 843, '#f4f4f4')
    ].join('');
    return `<style>
      :host { display: block; flex: none; width: 1422px; height: 759px; overflow: hidden; }
      svg { display: block; font-family: "Liberation Sans", sans-serif; }
    </style>
    <svg width="1422" height="759" viewBox="480 84 1422 759">${body}</svg>`;
  }
}

class CheckDialog extends Base {
  render() {
    const A = (a, b) => `当前图元跨数为${a}，属性中跨数为${b}`;
    const rows = [
      ['KL1(2)', A('3A', 2)], ['KL7(1)', A('0A', 1)], ['KL11(1)', A('0A', 1)], ['KL11(1)', A('0A', 1)], ['KL11(1)', A('0A', 1)], ['KL11(2)', A('1', 2)],
      ['KL16(1)', A('0A', 1)], ['KL16(1)', A('0A', 1)], ['KL20(2)', A('0B', 2)], ['KL22(1)', A('0A', 1)], ['KL22(1)', A('0A', 1)]
    ];
    const html = rows.map(([n, d]) => `<div>${n}</div><div>首层</div><div>${d}</div>`).join('');
    return `<style>
      :host { display: flex; flex-direction: column; position: absolute; left: 362px; top: 194px; width: 480px; height: 340px; box-sizing: border-box; border-radius: 9px; overflow: hidden;
        background: radial-gradient(ellipse 90px 26px at 270px 320px, #f4f4f4, transparent), linear-gradient(90deg, #fff 0, #fbfbfb 95px, #e3e3e3 122px, #e3e3e3 100%); }
      .head { display: flex; align-items: center; justify-content: space-between; height: 38px; padding: 0 13px 0 11px; font-size: 14px; color: #444; flex: none; }
      .checks { display: flex; align-items: center; height: 22px; padding-left: 14px; flex: none; color: #444; }
      .checks span { display: flex; align-items: center; gap: 3px; width: 98px; }
      .checks span:first-child { width: 86px; }
      .tbl { position: relative; box-sizing: border-box; margin: 5px 0 0 13px; width: 453px; height: 228px; border: 1px solid #bbb; background: #fff; overflow: hidden; flex: none; }
      .grid { display: grid; grid-template-columns: 91px 91px 231px; grid-auto-rows: 20px; width: 413px; }
      .grid div { display: flex; align-items: center; box-sizing: border-box; padding-left: 4px; border-right: 1px solid #ddd; border-bottom: 1px solid #ddd; white-space: nowrap; }
      .grid .h { justify-content: center; padding: 0; background: #f0f0f0; height: 21px; border-bottom: 1px solid #bbb; border-right: 1px solid #bbb; }
      .thumb { position: absolute; left: 441px; top: 14px; width: 8px; height: 86px; background: #c8c8c8; border-radius: 4px; }
      .foot { display: flex; justify-content: flex-end; gap: 8px; padding: 8px 13px 0 0; }
      .btn { display: flex; align-items: center; justify-content: center; box-sizing: border-box; width: 80px; height: 26px; border-radius: 4px; background: #fff; border: 1px solid #ccc; }
      .btn.pri { background: #2f80e4; border-color: #2f80e4; color: #fff; }
      .grip { position: absolute; right: 2px; bottom: 2px; width: 9px; height: 9px; background: radial-gradient(circle, #777 1px, transparent 1.2px) 0 0 / 3px 3px; clip-path: polygon(100% 0, 100% 100%, 0 100%); }
    </style>
    <div class="head"><span>校核梁图元</span>${CLOSE('#8a8a8a').replace('width="10" height="10"', 'width="11" height="11"')}</div>
    <div class="checks">
      <span><x-check checked></x-check>梁跨不匹配</span>
      <span><x-check checked></x-check>未使用的梁线</span>
      <span><x-check checked></x-check>未使用的标注</span>
      <span><x-check checked></x-check>缺少截面</span>
    </div>
    <div class="tbl">
      <div class="grid"><div class="h">名称</div><div class="h">楼层</div><div class="h">问题描述</div>${html}</div>
      <div class="thumb"></div>
    </div>
    <div class="foot"><div class="btn">编辑支座</div><div class="btn pri">刷新</div></div>
    <div class="grip"></div>`;
  }
}

class DisplayPanel extends Base {
  render() {
    const groups = [
      [null, ['剪力墙', '人防门框墙', '砌体墙', '砌体加筋', '保温墙', '暗梁', '墙垛', '幕墙'], 1],
      ['门窗洞', ['门', '窗', '门联窗', '墙洞', '带形窗', '带形洞', '飘窗', '老虎窗', '过梁', '壁龛'], 1],
      ['梁', ['梁', '连梁', '圈梁'], 1],
      ['板', ['现浇板', '螺旋板', '坡道', '柱帽', '板洞', '板受力筋', '板负筋', '楼层板带'], 0]
    ];
    let html = '';
    const cells = (on, focus) => `<div class="k ${focus ? 'focus' : ''}"><x-check ${on ? 'checked' : ''}></x-check></div><div class="k"><x-check></x-check></div>`;
    groups.forEach(([p, kids, on]) => {
      if (p) html += `<div class="n par"><span class="pm"></span><span>${p}</span></div>${cells(on, p === '板')}`;
      kids.forEach((k, i) => {
        const last = i === kids.length - 1 && p !== '板';
        html += `<div class="n kid ${last ? 'last' : ''}"><span>${k}</span></div>${cells(on)}`;
      });
    });
    return `<style>${PANEL_CSS}
      :host { display: flex; flex-direction: column; position: absolute; left: 1625px; top: 85px; width: 274px; height: 758px; box-sizing: border-box; overflow: hidden; background: #fff;
        border: 2px solid #3a454e; border-top-width: 4px; border-bottom: 0; border-radius: 6px 6px 0 0; }
      .band { height: 11px; padding-right: 5px; border-bottom: 1px solid #d4d4d4; }
      .title { height: 21px; line-height: 21px; padding-left: 9px; color: #777; font-weight: 700; background: #f0f0f0; border-bottom: 1px solid #ddd; flex: none; }
      .tbar { display: flex; align-items: flex-end; gap: 3px; height: 28px; padding-left: 4px; flex: none; border-bottom: 1px solid #ccc; box-sizing: border-box; }
      .t { display: flex; align-items: center; justify-content: center; box-sizing: border-box; width: 61px; height: 23px; border-radius: 4px 4px 0 0; background: #ddd; color: #555; }
      .t.on { background: #fff; color: #2f80e4; border: 1px solid #ccc; border-bottom: 0; }
      .tbl { position: relative; margin: 2px 3px 0 4px; border: 1px solid #ddd; flex: 1; overflow: hidden; }
      .grid { display: grid; grid-template-columns: 120px 63px 63px; grid-auto-rows: 21px; width: 246px; }
      .grid > div { display: flex; align-items: center; box-sizing: border-box; border-right: 1px solid #ddd; border-bottom: 1px solid #ddd; white-space: nowrap; }
      .grid .h { justify-content: center; height: 22px; }
      .grid .h.on { background: #7eb6f7; color: #fff; font-weight: 700; border: 1px solid #5b9cf0; }
      .k { justify-content: center; }
      .focus { border: 2px solid #808080 !important; }
      .n { padding-left: 30px; gap: 0; background: linear-gradient(#ddd, #ddd) 8px 0 / 1px 100% no-repeat; }
      .par { padding-left: 11px; gap: 7px; background: linear-gradient(#ddd, #ddd) 17px 13px / 1px 8px no-repeat, linear-gradient(#ddd, #ddd) 8px 0 / 1px 100% no-repeat; }
      .kid { padding-left: 40px; background: linear-gradient(#ddd, #ddd) 8px 0 / 1px 100% no-repeat, linear-gradient(#ddd, #ddd) 17px 0 / 1px 100% no-repeat, linear-gradient(#ddd, #ddd) 17px 10px / 17px 1px no-repeat; }
      .kid.last { background: linear-gradient(#ddd, #ddd) 8px 0 / 1px 100% no-repeat, linear-gradient(#ddd, #ddd) 17px 0 / 1px 11px no-repeat, linear-gradient(#ddd, #ddd) 17px 10px / 17px 1px no-repeat; }
    </style>
    <div class="band">${CLOSE('#aaa')}</div>
    <div class="title">显示设置</div>
    <div class="tbar"><div class="t on">图元显示</div><div class="t">楼层显示</div></div>
    <div class="tbl">
      <div class="grid"><div class="h">图层构件</div><div class="h on">显示图元</div><div class="h">显示名称</div>${html}</div>
      <div class="thumb" style="left:250px;top:116px;width:8px;height:180px"></div>
    </div>`;
  }
}

class RedArrow extends Base {
  render() {
    // shaft stays thin near the tail and widens towards the head
    return `<style>:host { position: absolute; left: 0; top: 0; pointer-events: none; display: block; }</style>
    <svg width="1902" height="843" style="display:block"><polygon points="273,565 320.700,521.500 357.700,488.300 454,404.600 562.700,310.700 560,305 580,303 574,321 569.200,318.300 460,411.400 362.300,493.700 323.300,524.500" fill="#ff2a14"/></svg>`;
  }
}

customElements.define('x-check', XCheck);
customElements.define('rb-item', RbItem);
customElements.define('rb-row', RbRow);
customElements.define('rb-col', RbCol);
customElements.define('rb-big', RbBig);
customElements.define('rb-group', RbGroup);
customElements.define('gtj-ribbon', GtjRibbon);
customElements.define('sel-box', SelBox);
customElements.define('layer-bar', LayerBar);
customElements.define('nav-panel', NavPanel);
customElements.define('mid-col', MidCol);
customElements.define('drawing-panel', DrawingPanel);
customElements.define('prop-panel', PropPanel);
customElements.define('cad-canvas', CadCanvas);
customElements.define('check-dialog', CheckDialog);
customElements.define('display-panel', DisplayPanel);
customElements.define('red-arrow', RedArrow);
customElements.define('gtj-app', GtjApp);
</script>
</body>
</html>
